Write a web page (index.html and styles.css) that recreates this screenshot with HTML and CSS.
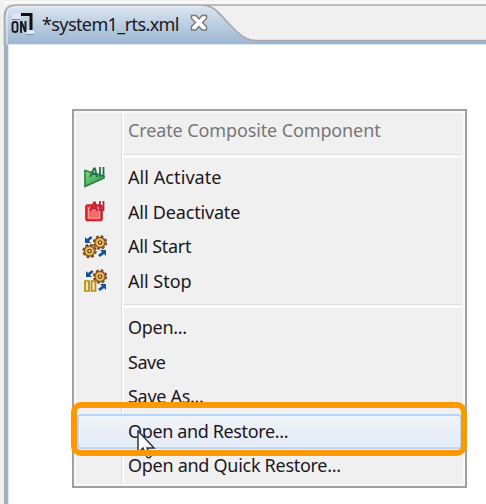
FILE: index.html
```html
<!DOCTYPE html>
<html lang="en">
<head>
<meta charset="utf-8">
<title>system1_rts.xml</title>
<link rel="stylesheet" href="styles.css">
</head>
<body>
<div class="editor">
  <header class="tabs">
    <svg class="tab-shape" width="486" height="45" viewBox="0 0 486 45">
      <defs><linearGradient id="tab" x1="0" y1="0" x2="0" y2="1"><stop offset="0" stop-color="#dce6f1"/><stop offset="1" stop-color="#99b4d1"/></linearGradient></defs>
      <rect x="4" y="1" width="482" height="3" fill="#f8f8f8"/>
      <path d="M5 46V15Q5 5 16 5H201C215 5 220 15 232 27C242 37 247 40.500 257 40.500H486V46Z" fill="url(#tab)"/>
      <path d="M7 46V16Q7 7 17 7H201" fill="none" stroke="#e8f0f8"/>
      <path d="M257 42.500H486" stroke="#99b4d1" stroke-width="3"/>
      <path d="M4.500 46V16Q4.500 5 16 5H486M201 5C215 5 220 15 232 27C242 37 247 40.500 257 40.500H486" fill="none" stroke="#aaa" stroke-width="1.700"/>
      <path d="M8 44.500H486" stroke="#dce8f4"/>
    </svg>
    <div class="tab">
      <svg class="file-icon" width="24" height="24" viewBox="0 0 24 24">
        <path d="M1 1h8v6H1zM15 18h8v4h-8z" fill="#dfe5fa"/><path d="M1 7.500h8M15 22.500h8" stroke="#778ba8"/>
        <path d="M10 2.500h10v15.500" fill="none" stroke="#111" stroke-width="3"/>
        <path d="M1.500 12q0-2 2.500-2t2.500 2v6q0 2-2.500 2t-2.500-2zM10 21V10h.500l3.500 9h.500V9" fill="none" stroke="#18191d" stroke-width="1.900"/>
      </svg>
      <span class="tab-title">*system1_rts.xml</span>
      <svg class="close" width="18" height="18" viewBox="0 0 18 18"><path d="M1.500 1.500H6L9 5L12 1.500H16.500V4.500L12.500 8.500L16.500 12.500V16H12L9 12.500L6 16H1.500V12.500L5.500 8.500L1.500 4.500Z" fill="#fff" stroke="#777" stroke-width="1.400"/></svg>
    </div>
  </header>
  <main class="canvas"></main>
</div>

<svg class="symbols" width="0" height="0">
  <defs>
    <linearGradient id="green" x2="1" y2="1"><stop stop-color="#8bd77d"/><stop offset="1" stop-color="#249547"/></linearGradient>
    <g id="all"><path d="M0 10L4 1.500H5L7 10M2 7H6M10 0V10M13.500 0V10" fill="none" stroke-width="1.800"/></g>
    <g id="gear">
      <circle r="5.900" fill="none" stroke="#76461e" stroke-width="2.600" stroke-dasharray="2.600 2.034"/>
      <circle r="5.200" fill="#e3ac48" stroke="#88521d" stroke-width="1.300"/>
      <circle r="3.200" fill="#f3cc70"/><circle r="1.700" fill="#f5efe2" stroke="#704113" stroke-width="1.300"/>
    </g>
    <path id="down" d="M0 7V1L2 3L6 0L7.500 2L4 5L6 7Z" fill="#1c5295"/>
    <path id="up" d="M8 0V6L6 4L2 7L0 5L4 2L2 0Z" fill="#1c5295"/>
  </defs>
</svg>

<nav class="menu">
  <div class="item disabled"><span class="icon"></span><span class="label w-create">Create Composite Component</span></div>
  <div class="separator"></div>
  <div class="item"><span class="icon"><svg width="26" height="26" viewBox="0 0 26 26"><path d="M3 5.500L22 11V13L3 21.500Z" fill="url(#green)" stroke="#248044" stroke-width="1.600"/><use href="#all" x="8" y="2" stroke="#227348"/></svg></span><span class="label w-activate">All Activate</span></div>
  <div class="item"><span class="icon"><svg width="26" height="26" viewBox="0 0 26 26"><rect x="4" y="6" width="16" height="15.500" rx="2" fill="#ee4548" stroke="#c61f2b" stroke-width="1.700"/><rect x="6.500" y="9" width="11" height="10" fill="#f66b68" stroke="#ffa49c"/><use href="#all" x="8" y="2" stroke="#bd2437"/></svg></span><span class="label w-deactivate">All Deactivate</span></div>
  <div class="item"><span class="icon"><svg width="26" height="26" viewBox="0 0 26 26"><use href="#gear" x="7.500" y="17"/><use href="#gear" x="18" y="8.500"/><use href="#down" x="3" y="2"/><use href="#up" x="16" y="16"/></svg></span><span class="label w-start">All Start</span></div>
  <div class="item"><span class="icon"><svg width="26" height="26" viewBox="0 0 26 26"><use href="#gear" x="18" y="8.500"/><use href="#down" x="4" y="2"/><use href="#up" x="16" y="16"/><path d="M3 13h4v10H3zM9.500 13h4v10h-4z" fill="#f9e697" stroke="#b78a20" stroke-width="1.700"/></svg></span><span class="label w-stop">All Stop</span></div>
  <div class="separator"></div>
  <div class="item"><span class="icon"></span><span class="label w-open">Open...</span></div>
  <div class="item"><span class="icon"></span><span class="label w-save">Save</span></div>
  <div class="item"><span class="icon"></span><span class="label w-saveas">Save As...</span></div>
  <div class="item selected"><span class="icon"></span><span class="label w-restore">Open and Restore...</span></div>
  <div class="item"><span class="icon"></span><span class="label w-quick">Open and Quick Restore...</span></div>
</nav>
<svg class="cursor" width="24" height="32" viewBox="0 0 24 32"><path d="M2 1V23L7 18L11 27Q13 29 15 26L11 18H18Z" fill="#fff" stroke="#30333d" stroke-width="1.500"/></svg>
<div class="highlight"></div>
</body>
</html>
```

FILE: styles.css
```css
* { box-sizing: border-box; }
body { margin: 0; width: 486px; height: 504px; overflow: hidden; background: #f0f0f0; font-family: "Noto Sans", "Open Sans", sans-serif; font-size: 18px; color: #1c1720; }
.editor { display: flex; flex-direction: column; height: 504px; }
.tabs { position: relative; height: 45px; flex: none; }
.tab-shape { position: absolute; top: 0; left: 0; }
.tab { position: relative; display: flex; align-items: center; height: 45px; padding: 3px 0 0 11px; }
.file-icon { flex: none; margin-right: 7px; }
.tab-title { width: 148px; font-size: 18px; letter-spacing: -.6px; white-space: nowrap; }
.close { flex: none; margin-top: -3px; }
.canvas { flex: 1; margin-left: 4px; border-left: 1px solid #aaa; background: #fff; box-shadow: inset 3px 0 #99b4d1, inset 4px 0 #dce8f4; }
.menu { position: absolute; left: 72px; top: 109px; width: 395px; height: 379px; padding: 3px 3px; border: 2px solid #a0a0a0; background: linear-gradient(to right, transparent 47px, #dedede 47px 48px, #fafafa 48px 50px, transparent 50px), #f0f0f0; box-shadow: inset 0 0 0 2px #f9f9f9; }
.item { display: flex; align-items: center; height: 34.400px; }
.icon { display: flex; width: 51px; height: 26px; padding-left: 5px; flex: none; }
.label { white-space: nowrap; line-height: 24px; padding-bottom: 1.500px; }
.w-create { letter-spacing: -.12px; }
.w-activate { letter-spacing: .08px; }
.w-deactivate { letter-spacing: -.17px; }
.w-start { letter-spacing: -.3px; }
.w-stop { letter-spacing: -.03px; }
.w-open { letter-spacing: -.3px; }
.w-save { letter-spacing: -.45px; }
.w-saveas { letter-spacing: -.3px; }
.w-restore { letter-spacing: -.37px; }
.w-quick { letter-spacing: -.28px; }
.disabled { color: #777; }
.separator { height: 12.500px; margin-left: 46px; padding-top: 6px; }
.separator::before { content: ""; display: block; height: 3px; border-top: 1px solid #dedede; background: #fafafa; }
.selected { border: 2px solid #b9d5fa; border-radius: 4px; background: linear-gradient(#f1f4f8cc, #e1eafacc); box-shadow: inset 0 0 0 1px #edf5ff; }
.selected .icon { width: 49px; padding-left: 3px; }
.cursor { position: absolute; left: 136px; top: 430px; }
.highlight { position: absolute; left: 71px; top: 402px; width: 396px; height: 54px; border: 6px solid #ff9900; border-radius: 10px; }
.symbols { position: absolute; }
```
